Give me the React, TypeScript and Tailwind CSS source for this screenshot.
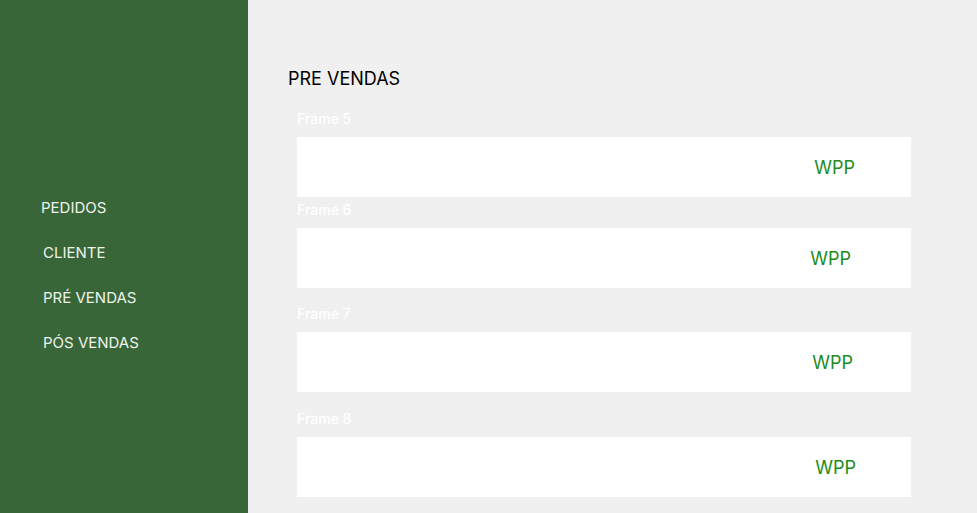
const NAV = ["PEDIDOS", "CLIENTE", "PRÉ VENDAS", "PÓS VENDAS"];

const FRAMES = [
  { name: "Frame 5", top: "mt-[20px]", wpp: "pr-[56px]" },
  { name: "Frame 6", top: "mt-[5px]", wpp: "pr-[60px]" },
  { name: "Frame 7", top: "mt-[18px]", wpp: "pr-[58px]" },
  { name: "Frame 8", top: "mt-[19px]", wpp: "pr-[55px]" },
];

export default function App() {
  return (
    <div className="flex h-[513px] w-[977px] overflow-hidden bg-[#f0f0f0] font-['Inter',sans-serif]">
      <aside className="flex w-[248px] flex-none flex-col justify-center gap-[25px] bg-[#386639] pl-[43px] pt-[37px] text-[15px] leading-[20px] text-[#eef4ea]">
        {NAV.map((n, i) => (
          <div key={n} className={i === 0 ? "-ml-[2px]" : ""}>
            {n}
          </div>
        ))}
      </aside>
      <main className="flex-1 pl-[40px] pt-[67px]">
        <h1 className="text-[18px] leading-[24px] text-black">PRE VENDAS</h1>
        <div className="flex flex-col pl-[9px] pr-[66px]">
          {FRAMES.map((f) => (
            <div key={f.name} className={f.top}>
              <div className="mb-[10px] text-[14px] font-medium leading-[16px] text-white">{f.name}</div>
              <div className={`flex h-[60px] items-center justify-end bg-white ${f.wpp}`}>
                <span className="text-[18px] text-[#1c8c1c]">WPP</span>
              </div>
            </div>
          ))}
        </div>
      </main>
    </div>
  );
}
